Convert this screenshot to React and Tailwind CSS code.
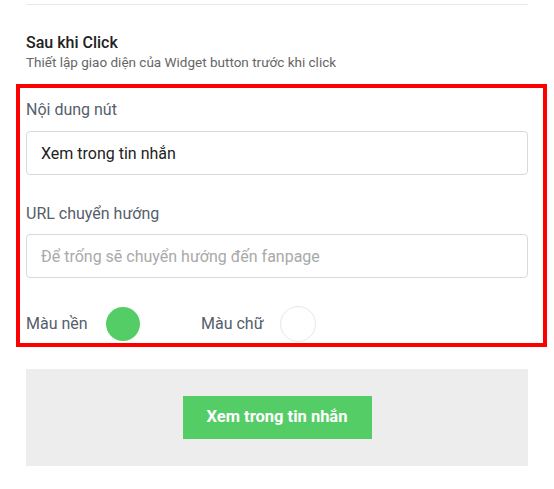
import { useState } from 'react'

const font = { fontFamily: 'Roboto, "Noto Sans", sans-serif' }

export default function App() {
  const [label, setLabel] = useState('Xem trong tin nhắn')
  const [url, setUrl] = useState('')

  return (
    <div className="pt-[4px] bg-white min-h-screen" style={font}>
      <div className="ml-[26px] w-[502px] h-px bg-[#e8e8e8]" />

      <div className="ml-[26px] mt-[28px] text-[16px] leading-[20px] font-medium text-[#222]">Sau khi Click</div>
      <div className="ml-[26px] text-[13.5px] leading-[18px] text-[#666]">
        Thiết lập giao diện của Widget button trước khi click
      </div>

      {/* Khung cấu hình */}
      <div className="mt-[13px] ml-[16px] w-[531px] border-4 border-[#ff0000] pl-[6px] pr-[15px] pt-[10px] pb-[2px]">
        <label className="block text-[16px] leading-[24px] text-[#555e6b]">Nội dung nút</label>
        <input
          value={label}
          onChange={(e) => setLabel(e.target.value)}
          className="mt-[9px] block w-full h-[44px] border border-[#d9d9d9] rounded-[4px] px-[14px] text-[16px] text-[#222] outline-none"
        />

        <label className="block mt-[27px] text-[16px] leading-[24px] text-[#555e6b]">URL chuyển hướng</label>
        <input
          value={url}
          onChange={(e) => setUrl(e.target.value)}
          placeholder="Để trống sẽ chuyển hướng đến fanpage"
          className="mt-[8px] block w-full h-[44px] border border-[#d9d9d9] rounded-[4px] px-[14px] text-[16px] text-[#222] placeholder:text-[#a9a9a9] outline-none"
        />

        <div className="mt-[29px] h-[34px] flex items-center">
          <div className="w-[175px] flex items-center">
            <span className="text-[16px] text-[#555e6b]">Màu nền</span>
            <span className="ml-[18px] w-[34px] h-[34px] rounded-full bg-[#55cd67]" />
          </div>
          <div className="flex items-center">
            <span className="text-[16px] text-[#555e6b]">Màu chữ</span>
            <span className="ml-[16px] w-[36px] h-[36px] rounded-full bg-white border border-[#e6e6e6]" />
          </div>
        </div>
      </div>

      {/* Xem trước */}
      <div className="mt-[22px] ml-[26px] w-[502px] h-[97px] bg-[#ededed] flex items-center justify-center">
        <button className="w-[189px] h-[43px] bg-[#55cd67] text-white text-[16.5px] font-bold">
          Xem trong tin nhắn
        </button>
      </div>
    </div>
  )
}
